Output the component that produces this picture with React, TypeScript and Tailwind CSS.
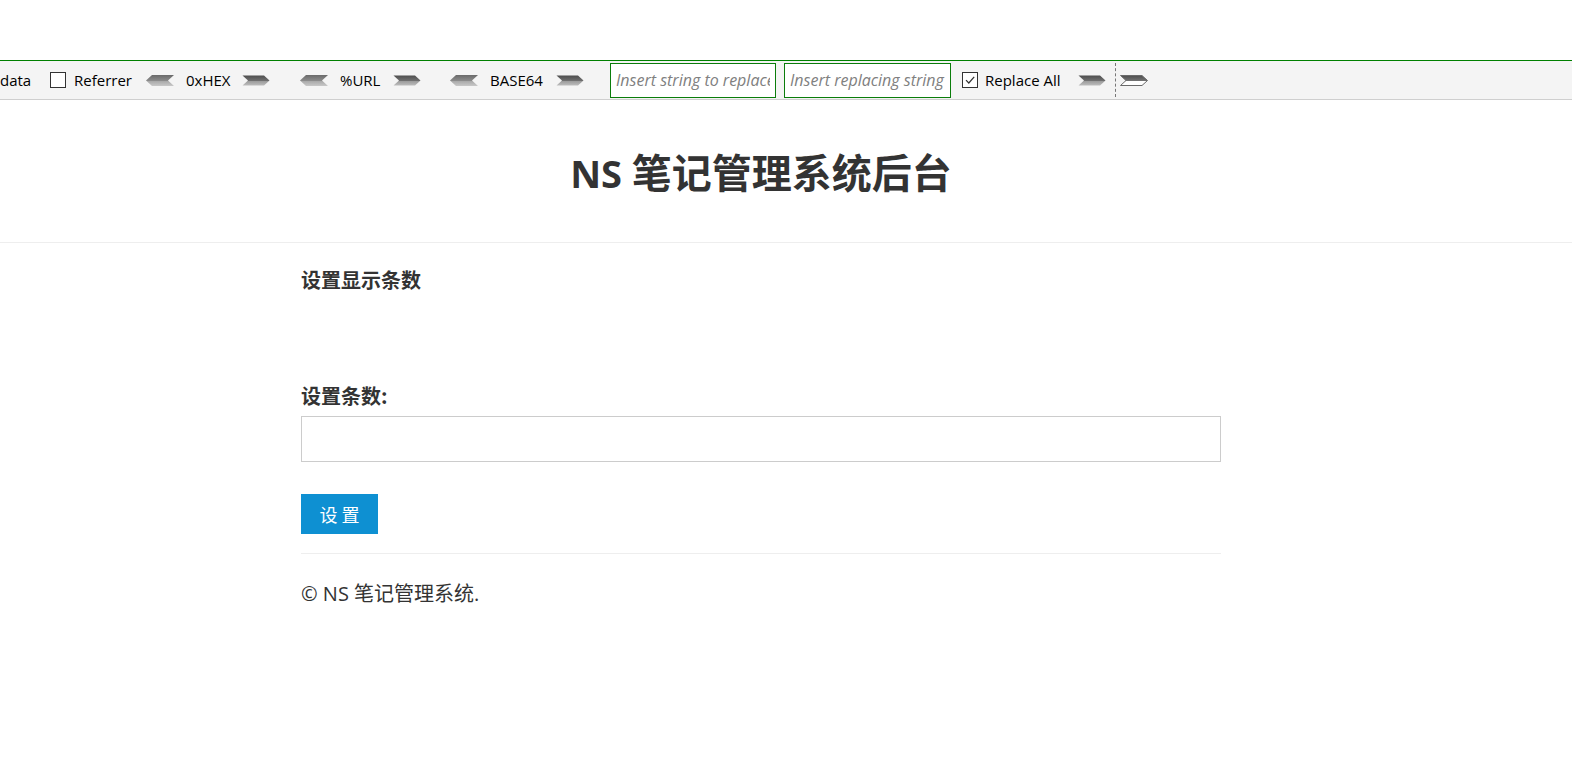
import React from "react";

const ArrowLeft = () => (
  <svg width="28" height="11" viewBox="0 0 28 11" className="shrink-0">
    <defs>
      <linearGradient id="gl" x1="0" y1="0" x2="0" y2="1">
        <stop offset="0" stopColor="#6a6a6a" />
        <stop offset="0.5" stopColor="#8a8a8a" />
        <stop offset="0.55" stopColor="#a8a8a8" />
        <stop offset="1" stopColor="#c8c8c8" />
      </linearGradient>
    </defs>
    <polygon points="0,5.5 6,0 28,0 22,5.5 28,11 6,11" fill="url(#gl)" />
  </svg>
);

const ArrowRight = ({ hollow = false }: { hollow?: boolean }) => (
  <svg width="28" height="11" viewBox="0 0 28 11" className="shrink-0">
    <defs>
      <linearGradient id="gr" x1="0" y1="0" x2="0" y2="1">
        <stop offset="0" stopColor="#4e4e4e" />
        <stop offset="0.5" stopColor="#6e6e6e" />
        <stop offset="0.55" stopColor="#9a9a9a" />
        <stop offset="1" stopColor="#bdbdbd" />
      </linearGradient>
      <linearGradient id="gh" x1="0" y1="0" x2="0" y2="1">
        <stop offset="0" stopColor="#4e4e4e" />
        <stop offset="0.5" stopColor="#707070" />
        <stop offset="0.55" stopColor="#ffffff" />
        <stop offset="1" stopColor="#ffffff" />
      </linearGradient>
    </defs>
    <polygon
      points="0.5,0.5 22,0.5 27.5,5.5 22,10.5 0.5,10.5 6,5.5"
      fill={hollow ? "url(#gh)" : "url(#gr)"}
      stroke={hollow ? "#6a6a6a" : "none"}
      strokeWidth="1"
    />
  </svg>
);

const Check = ({ checked = false }: { checked?: boolean }) => (
  <span className="flex h-[16px] w-[16px] shrink-0 items-center justify-center border border-[#333] bg-white">
    {checked && (
      <svg width="12" height="12" viewBox="0 0 12 12">
        <path d="M2 6.2 L4.8 9 L10.2 2.8" fill="none" stroke="#333" strokeWidth="1.2" />
      </svg>
    )}
  </span>
);

const Toolbar = () => (
  <div className="flex h-[39px] items-center border-b border-[#cfcfcf] bg-[#f4f4f4] text-[15px] text-black [font-family:'Open_Sans','Noto_Sans',sans-serif]">
    <span className="w-[50px] shrink-0">data</span>
    <Check />
    <span className="ml-[8px] w-[72px] shrink-0">Referrer</span>
    <ArrowLeft />
    <span className="ml-[12px] w-[56px] shrink-0">0xHEX</span>
    <ArrowRight />
    <span className="w-[30px] shrink-0" />
    <ArrowLeft />
    <span className="ml-[12px] w-[53px] shrink-0">%URL</span>
    <ArrowRight />
    <span className="w-[29px] shrink-0" />
    <ArrowLeft />
    <span className="ml-[12px] w-[66px] shrink-0">BASE64</span>
    <ArrowRight />
    <input
      className="ml-[26px] h-[35px] w-[166px] shrink-0 border border-[#0b7d0b] bg-white px-[5px] text-[16px] italic placeholder:text-[#808080] outline-none"
      placeholder="Insert string to replace"
    />
    <input
      className="ml-[8px] h-[35px] w-[167px] shrink-0 border border-[#0b7d0b] bg-white px-[5px] text-[16px] italic placeholder:text-[#808080] outline-none"
      placeholder="Insert replacing string"
    />
    <span className="ml-[11px]">
      <Check checked />
    </span>
    <span className="ml-[7px] w-[93px] shrink-0">Replace All</span>
    <ArrowRight />
    <span className="ml-[9px] mr-[4px] h-[34px] border-l border-dashed border-[#777]" />
    <ArrowRight hollow />
  </div>
);

export default function App() {
  return (
    <div className="min-h-[764px] bg-white text-[#333] [font-family:'Open_Sans','Noto_Sans_CJK_SC',sans-serif]">
      <div className="h-[61px] border-b border-[#008000]" />
      <Toolbar />
      <div className="flex h-[142px] w-[1522px] items-center justify-center">
        <h1 className="font-bold leading-none text-[#333]">
          <span className="text-[38px]">NS </span>
          <span className="text-[40px] [font-family:'Noto_Sans_CJK_SC',sans-serif]">笔记管理系统后台</span>
        </h1>
      </div>
      <div className="border-t border-[#eeeeee]">
        <div className="ml-[301px] w-[920px] pt-[23px]">
          <h2 className="text-[20px] font-bold leading-[28px] [font-family:'Noto_Sans_CJK_SC',sans-serif]">设置显示条数</h2>
          <form className="mt-[88px]" onSubmit={(e) => e.preventDefault()}>
            <label className="block text-[20px] font-bold leading-[28px] [font-family:'Noto_Sans_CJK_SC',sans-serif]">设置条数:</label>
            <input className="mt-[6px] block h-[46px] w-full border border-[#cccccc] px-3 text-[16px] outline-none" />
            <button className="mt-[32px] block h-[40px] w-[77px] bg-[#0e90d2] text-[18px] tracking-[4px] text-white [font-family:'Noto_Sans_CJK_SC',sans-serif]">
              <span className="pl-[4px]">设置</span>
            </button>
          </form>
          <div className="mt-[19px] border-t border-[#eeeeee] pt-[25px]">
            <p className="text-[20px] leading-[28px]">
              © NS <span className="[font-family:'Noto_Sans_CJK_SC',sans-serif]">笔记管理系统</span>.
            </p>
          </div>
        </div>
      </div>
    </div>
  );
}
